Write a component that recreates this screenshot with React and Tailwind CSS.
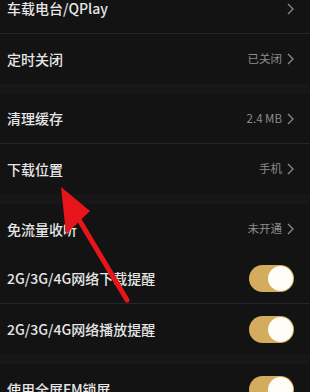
import React from 'react';

const Chevron = () => (
  <svg width="7" height="12" viewBox="0 0 7 12" className="ml-[5px]">
    <path d="M1 1l5 5-5 5" fill="none" stroke="#8a8a8a" strokeWidth="1.3" />
  </svg>
);

const Toggle = () => (
  <div className="w-[45px] h-[27px] rounded-full bg-[#d4ac5e] flex items-center justify-end pr-[1px]">
    <div className="w-[25px] h-[25px] rounded-full bg-[#fdfcf6]" />
  </div>
);

const Row = ({ label, value, chevron, toggle, line }) => (
  <div className={`h-[50px] flex items-center justify-between pl-[7px] pr-[16px] ${line ? 'border-b border-[#262626]' : ''}`}>
    <span className="text-[14px] font-medium text-[#e6e6e6]">{label}</span>
    {toggle ? (
      <Toggle />
    ) : (
      <div className="flex items-center">
        {value && <span className="text-[11.5px] text-[#8c8c8c]">{value}</span>}
        {chevron && <Chevron />}
      </div>
    )}
  </div>
);

const Band = () => <div className="h-[10px] bg-[#171717]" />;

export default function App() {
  return (
    <div
      className="relative w-[310px] h-[392px] overflow-hidden bg-[#131313]"
      style={{ fontFamily: '"Noto Sans CJK SC", "Noto Sans", sans-serif' }}
    >
      <div className="-mt-[16px]">
        <Row label="车载电台/QPlay" chevron line />
        <Row label="定时关闭" value="已关闭" chevron />
        <Band />
        <Row label="清理缓存" value="2.4 MB" chevron line />
        <Row label="下载位置" value="手机" chevron />
        <Band />
        <Row label="免流量收听" value="未开通" chevron />
        <Row label="2G/3G/4G网络下载提醒" toggle line />
        <Row label="2G/3G/4G网络播放提醒" toggle />
        <Band />
        <Row label="使用全屏FM锁屏" toggle />
      </div>
      <svg className="absolute left-0 top-0" width="310" height="392" viewBox="0 0 310 392">
        <line x1="78" y1="218" x2="127" y2="300" stroke="#e8141b" strokeWidth="5" strokeLinecap="round" />
        <polygon points="61,187 90,211 66,234" fill="#e8141b" />
      </svg>
    </div>
  );
}
